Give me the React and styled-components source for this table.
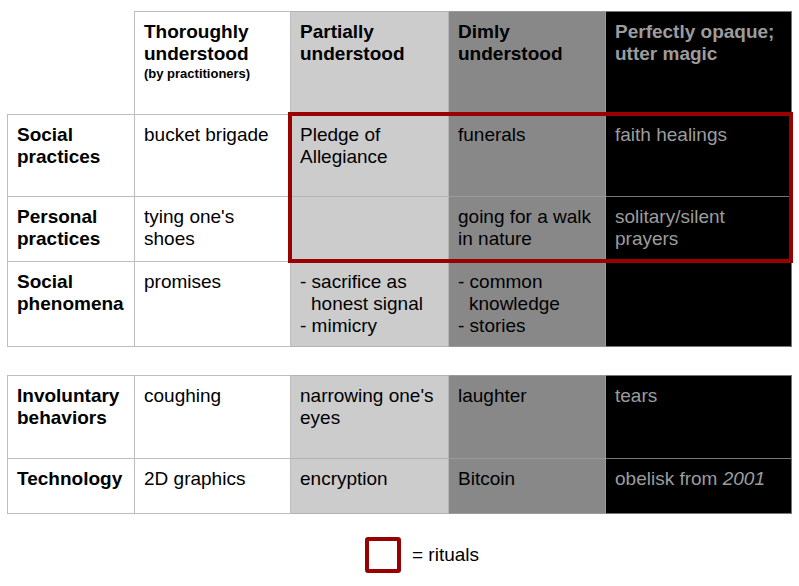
import styled, { createGlobalStyle } from 'styled-components'

const GlobalStyle = createGlobalStyle`
  html, body {
    margin: 0;
    padding: 0;
    background: #fff;
  }
  body {
    font-family: 'Liberation Sans', Arial, sans-serif;
    color: #000;
  }
`

const tones = {
  white: { bg: '#ffffff', fg: '#000000', line: '#bdbdbd' },
  light: { bg: '#cccccc', fg: '#000000', line: '#b3b3b3' },
  mid: { bg: '#888888', fg: '#000000', line: '#9a9a9a' },
  dark: { bg: '#000000', fg: '#9c9c9c', line: '#777777' }
}

const toneOrder = ['white', 'light', 'mid', 'dark']

const Page = styled.div`
  width: 799px;
  height: 586px;
  padding: 11px 0 0 7px;
  box-sizing: border-box;
  overflow: hidden;
`

const TableWrap = styled.div`
  position: relative;
  width: 785px;
  margin-bottom: ${p => p.$gap || 0}px;
`

const Grid = styled.div`
  display: grid;
  grid-template-columns: 128px 156px 158px 157px 186px;
  grid-template-rows: ${p => p.$rows};
`

const Cell = styled.div`
  box-sizing: border-box;
  padding: 9px 8px 0 9px;
  font-size: 19px;
  line-height: 22px;
  background: ${p => tones[p.$tone].bg};
  color: ${p => tones[p.$tone].fg};
  border-right: 1px solid ${p => tones[p.$tone].line};
  border-bottom: 1px solid ${p => tones[p.$tone].line};
  border-top: ${p => (p.$top ? `1px solid ${tones[p.$tone].line}` : 'none')};
  border-left: ${p => (p.$left ? `1px solid ${tones[p.$tone].line}` : 'none')};
  font-weight: ${p => (p.$bold ? 700 : 400)};
`

const Corner = styled.div`
  border-right: 1px solid #bdbdbd;
  border-bottom: 1px solid #bdbdbd;
`

const Note = styled.div`
  font-size: 13px;
  line-height: 15px;
  font-weight: 700;
  margin-top: 1px;
`

const Items = styled.ul`
  list-style: none;
  margin: 0;
  padding: 0;
`

const Item = styled.li`
  padding-left: 11px;
  text-indent: -11px;
`

const RitualFrame = styled.div`
  position: absolute;
  left: 281px;
  top: 101px;
  width: 505px;
  height: 151px;
  box-sizing: border-box;
  border: 4px solid #990000;
  pointer-events: none;
`

const Legend = styled.div`
  display: flex;
  align-items: center;
  gap: 11px;
  margin-left: 358px;
  font-size: 19px;
`

const Swatch = styled.div`
  width: 36px;
  height: 36px;
  box-sizing: border-box;
  border: 4px solid #990000;
  border-radius: 3px;
`

const headers = [
  <>Thoroughly understood<Note>(by practitioners)</Note></>,
  'Partially understood',
  'Dimly understood',
  'Perfectly opaque; utter magic'
]

const dashList = items => (
  <Items>
    {items.map(t => <Item key={t}>- {t}</Item>)}
  </Items>
)

const topRows = [
  ['Social practices', 'bucket brigade', 'Pledge of Allegiance', 'funerals', 'faith healings'],
  ["Personal practices", "tying one's shoes", '', 'going for a walk in nature', 'solitary/silent prayers'],
  ['Social phenomena', 'promises', dashList(['sacrifice as honest signal', 'mimicry']), dashList(['common knowledge', 'stories']), '']
]

const bottomRows = [
  ['Involuntary behaviors', 'coughing', "narrowing one's eyes", 'laughter', 'tears'],
  ['Technology', '2D graphics', 'encryption', 'Bitcoin', <>obelisk from <i>2001</i></>]
]

function BodyRows ({ rows, firstTop }) {
  return rows.map((row, r) =>
    row.map((content, c) => (
      <Cell
        key={`${r}-${c}`}
        $tone={c === 0 ? 'white' : toneOrder[c - 1]}
        $left={c === 0}
        $top={firstTop && r === 0}
        $bold={c === 0}
      >
        {content}
      </Cell>
    ))
  )
}

function App () {
  return (
    <Page>
      <GlobalStyle />
      <TableWrap $gap={28}>
        <Grid $rows='104px 82px 65px 85px'>
          <Corner />
          {headers.map((h, i) => (
            <Cell key={i} $tone={toneOrder[i]} $top $bold>
              {h}
            </Cell>
          ))}
          <BodyRows rows={topRows} />
        </Grid>
        <RitualFrame />
      </TableWrap>
      <TableWrap $gap={23}>
        <Grid $rows='84px 55px'>
          <BodyRows rows={bottomRows} firstTop />
        </Grid>
      </TableWrap>
      <Legend>
        <Swatch />
        <span>= rituals</span>
      </Legend>
    </Page>
  )
}

export default App
